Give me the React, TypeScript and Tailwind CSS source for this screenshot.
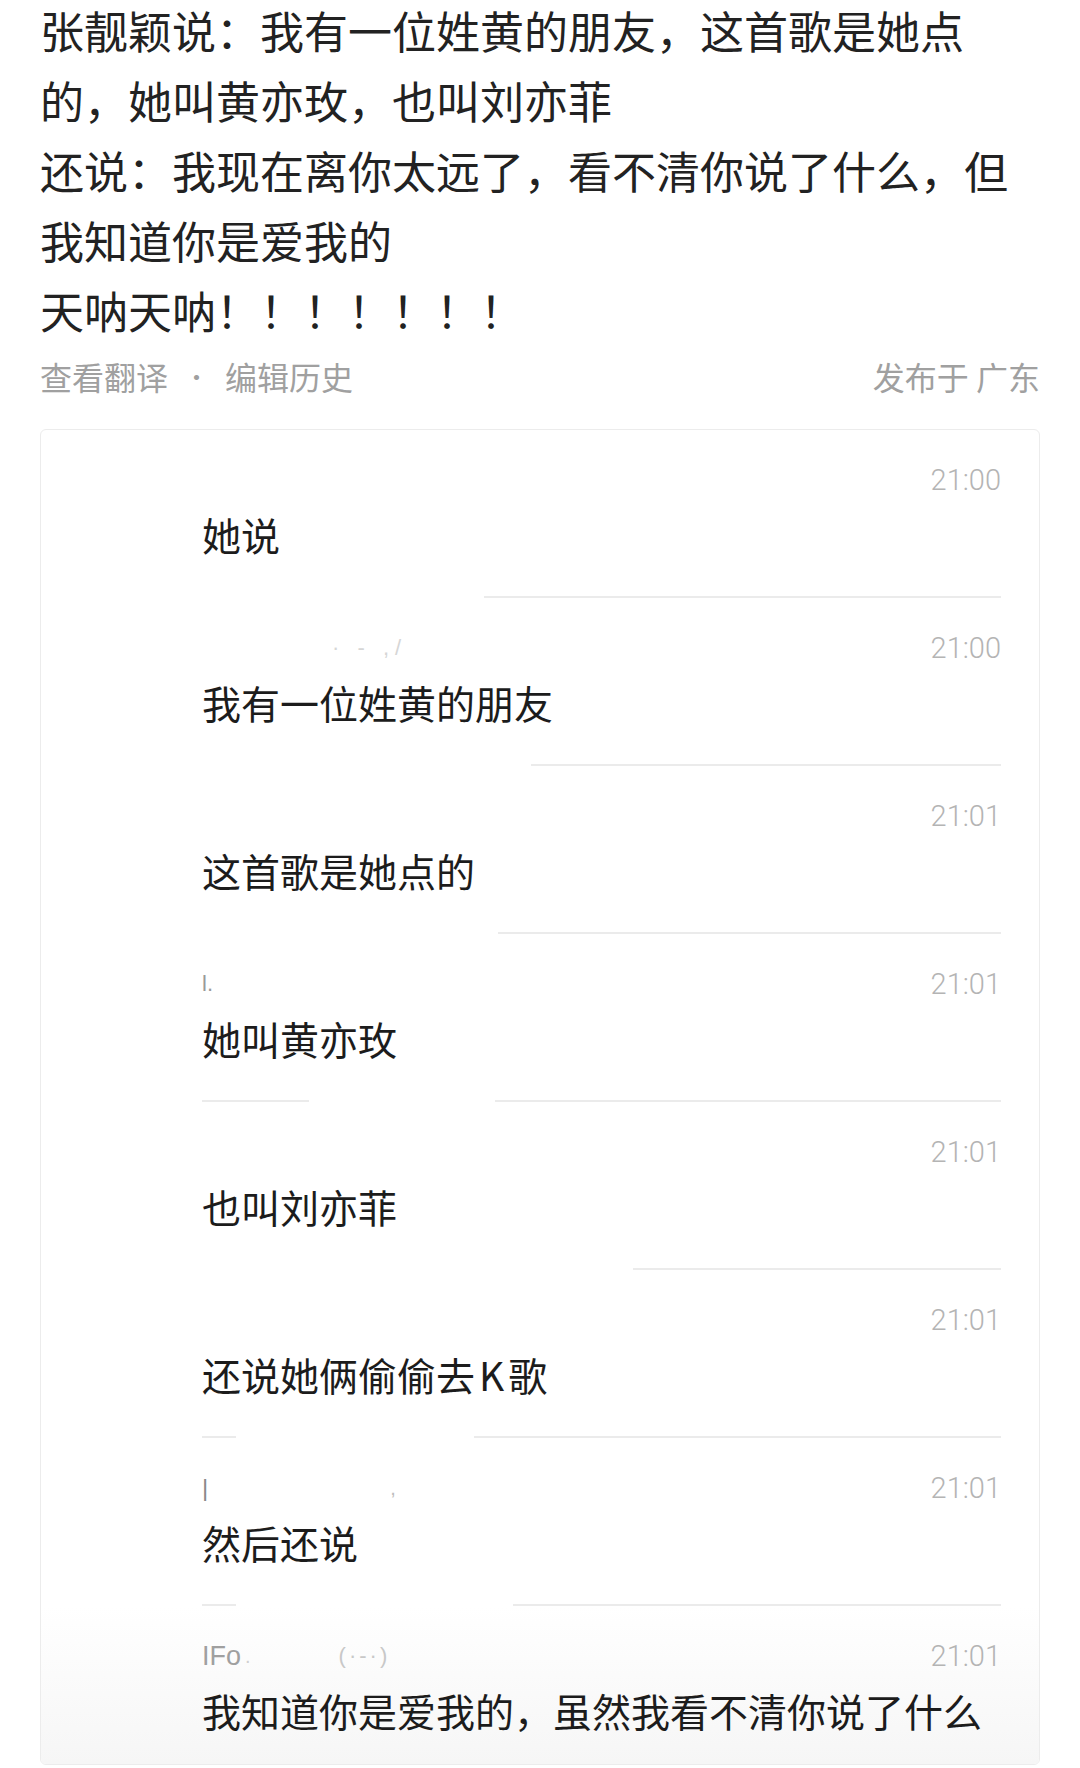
import React from 'react';

type Row = {
  time: string;
  text: React.ReactNode;
  name?: React.ReactNode;
  segments: string[];
};

const rows: Row[] = [
  { time: '21:00', text: '她说', segments: ['ml-[282px] flex-1'] },
  {
    time: '21:00',
    text: '我有一位姓黄的朋友',
    name: <span className="ml-[130px] text-[22px] tracking-[6px] text-[#d6d6d6]">· - ,/</span>,
    segments: ['ml-[329px] flex-1'],
  },
  { time: '21:01', text: '这首歌是她点的', segments: ['ml-[296px] flex-1'] },
  {
    time: '21:01',
    text: '她叫黄亦玫',
    name: <span className="text-[22px] text-[#9a9a9a]">l.</span>,
    segments: ['w-[107px]', 'ml-[186px] flex-1'],
  },
  { time: '21:01', text: '也叫刘亦菲', segments: ['ml-[431px] flex-1'] },
  {
    time: '21:01',
    text: (
      <>
        还说她俩偷偷去<span className="mx-[4px]">K</span>歌
      </>
    ),
    segments: ['w-[34px]', 'ml-[238px] flex-1'],
  },
  {
    time: '21:01',
    text: '然后还说',
    name: (
      <>
        <span className="text-[24px] text-[#8a8a8a]">|</span>
        <span className="ml-[182px] text-[20px] text-[#bdbdbd]">,</span>
      </>
    ),
    segments: ['w-[34px]', 'ml-[277px] flex-1'],
  },
];

const TimeLine: React.FC<{ time: string; name?: React.ReactNode }> = ({ time, name }) => (
  <div className="flex items-center justify-between leading-[36px]">
    <div className="flex items-center font-['Liberation_Sans',sans-serif]">{name}</div>
    <span className="font-['Roboto',sans-serif] text-[29px] font-light text-[#b4b4b4]">{time}</span>
  </div>
);

export default function App() {
  return (
    <div className="h-[1768px] w-[1080px] overflow-hidden bg-white px-[40px] font-['Noto_Sans_CJK_SC',sans-serif]">
      <div className="text-[44px] leading-[70px] whitespace-nowrap text-[#222222]">
        <div className="leading-[60px]">张靓颖说：我有一位姓黄的朋友，这首歌是她点</div>
        <div className="mt-[5px]">的，她叫黄亦玫，也叫刘亦菲</div>
        <div>还说：我现在离你太远了，看不清你说了什么，但</div>
        <div>我知道你是爱我的</div>
        <div>天呐天呐！！！！！！！</div>
      </div>

      <div className="mt-[11px] flex justify-between text-[32px] leading-[40px] text-[#a0a0a0]">
        <div className="flex items-center">
          <span>查看翻译</span>
          <span className="w-[57px] text-center text-[24px]">·</span>
          <span>编辑历史</span>
        </div>
        <span>发布于 广东</span>
      </div>

      <div className="mt-[33px] overflow-hidden rounded-[6px] border border-[#ececec]">
        <div className="pl-[161px] pr-[38px]">
          {rows.map((row, i) => (
            <div key={i} className="flex h-[168px] flex-col pt-[32px]">
              <TimeLine time={row.time} name={row.name} />
              <div className="mt-[11px] text-[39px] leading-[50px] whitespace-nowrap text-[#1c1c1c]">
                {row.text}
              </div>
              <div className="mt-auto flex h-[2px]">
                {row.segments.map((s, j) => (
                  <div key={j} className={`${s} h-[2px] bg-[#ebebeb]`} />
                ))}
              </div>
            </div>
          ))}
        </div>
        <div className="h-[158px] bg-gradient-to-b from-white to-[#f6f6f6] pl-[161px] pr-[38px] pt-[32px]">
          <TimeLine
            time="21:01"
            name={
              <>
                <span className="text-[27px] text-[#a0a0a0]">IFo</span>
                <span className="ml-[4px] text-[20px] text-[#d0d0d0]">.</span>
                <span className="ml-[88px] text-[22px] tracking-[3px] text-[#c8c8c8]">(·-·)</span>
              </>
            }
          />
          <div className="mt-[11px] text-[39px] leading-[50px] whitespace-nowrap text-[#1c1c1c]">
            我知道你是爱我的，虽然我看不清你说了什么
          </div>
        </div>
      </div>
    </div>
  );
}
